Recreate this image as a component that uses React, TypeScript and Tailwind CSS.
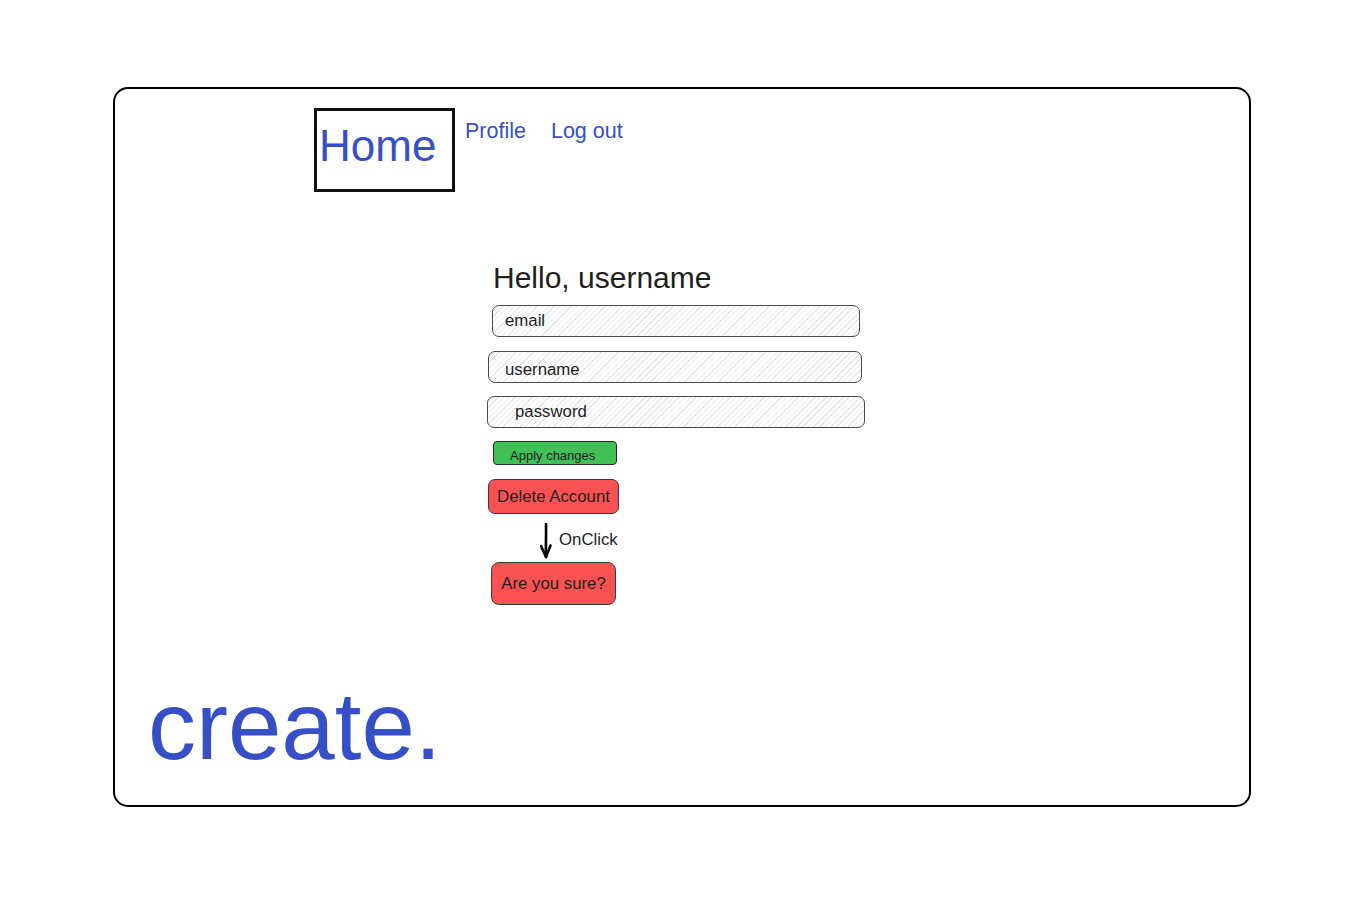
import React from 'react'

const hatch =
  'bg-[repeating-linear-gradient(135deg,#ffffff_0px,#ffffff_3px,#e4e6ea_3px,#e4e6ea_4px)]'

const Field = ({ label, className }: { label: string; className: string }) => (
  <div
    className={`h-[32px] flex items-center rounded-[7px] border border-[#4a4a4a] text-[16.8px] text-[#1e1e1e] ${hatch} ${className}`}
  >
    {label}
  </div>
)

export default function App() {
  return (
    <div className="min-h-[914px] w-[1347px] bg-white pt-[87px] pl-[113px] font-['Liberation_Sans',Arial,sans-serif]">
      <div className="w-[1138px] h-[720px] rounded-[15px] border-2 border-black flex flex-col">
        {/* nav */}
        <div className="flex items-start mt-[19px] ml-[199px]">
          <div className="w-[141px] h-[84px] border-[3px] border-[#111] pt-[13px] pl-[2px]">
            <span className="block text-[44px] leading-[44px] text-[#364fc7]">Home</span>
          </div>
          <a className="mt-[7px] ml-[10px] text-[21.5px] text-[#364fc7]">Profile</a>
          <a className="mt-[7px] ml-[25px] text-[21.5px] text-[#364fc7]">Log out</a>
        </div>

        {/* form */}
        <div className="flex flex-col items-start mt-[67px] ml-[372px]">
          <h1 className="mt-[2px] -mb-[2px] ml-[6px] text-[30px] leading-[33px] text-[#1e1e1e]">Hello, username</h1>
          <Field label="email" className="mt-[13px] ml-[5px] w-[368px] pl-[12px]" />
          <Field label="username" className="mt-[14px] ml-[1px] w-[374px] pl-[16px] pt-[6px]" />
          <Field label="password" className="mt-[13px] w-[378px] pl-[27px]" />

          <button className="mt-[13px] ml-[6px] w-[124px] h-[24px] rounded-[4px] border border-[#2a2a2a] bg-[#40c057] text-left pl-[16px] pt-[4px] text-[13px] text-[#1e1e1e]">
            Apply changes
          </button>

          <button className="mt-[14px] ml-[1px] w-[131px] h-[35px] rounded-[7px] border border-[#3a3a3a] bg-[#fa5252] text-[16.8px] text-[#1e1e1e]">
            Delete Account
          </button>

          <div className="mt-[9px] ml-[53px] h-[35px] flex items-center">
            <svg width="12" height="36" viewBox="0 0 12 36" fill="none" stroke="#000" strokeWidth="2.6" strokeLinecap="round" strokeLinejoin="round">
              <path d="M6 1 C6.3 12 5.6 24 6 34" />
              <path d="M1 23 L6 34 L10.5 22.5" />
            </svg>
            <span className="ml-[7px] -mt-[2px] text-[16.8px] text-[#1e1e1e]">OnClick</span>
          </div>

          <button className="mt-[4px] ml-[4px] w-[125px] h-[43px] rounded-[8px] border border-[#3a3a3a] bg-[#fa5252] text-[16.8px] text-[#1e1e1e]">
            Are you sure?
          </button>
        </div>

        <div className="mt-[73px] ml-[33px] text-[96px] leading-[96px] text-[#364fc7]">create.</div>
      </div>
    </div>
  )
}
